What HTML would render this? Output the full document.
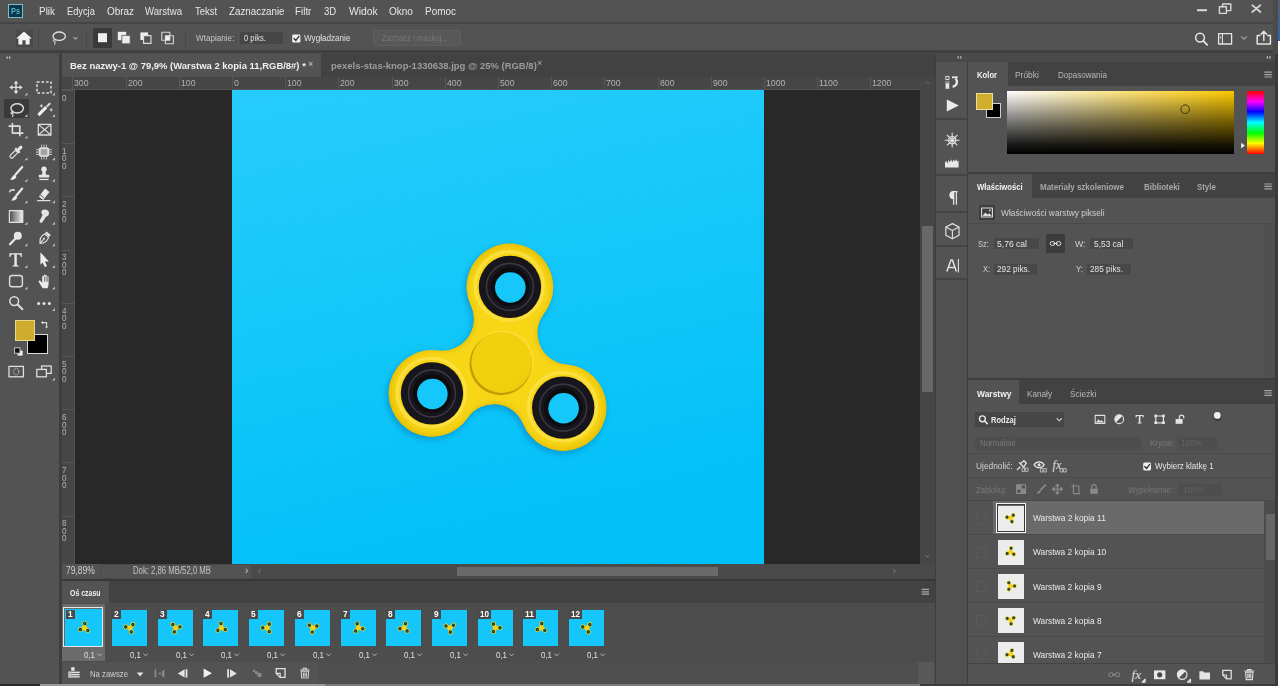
<!DOCTYPE html>
<html lang="pl"><head><meta charset="utf-8"><title>Photoshop</title>
<style>
*{box-sizing:border-box;margin:0;padding:0}
html,body{width:1280px;height:686px;overflow:hidden;background:#535353}
body{position:relative;font-family:"Liberation Sans", "DejaVu Sans", sans-serif;font-size:11px;color:#d8d8d8;-webkit-font-smoothing:antialiased}
.a{position:absolute}
.t{position:absolute;white-space:nowrap;line-height:1;transform-origin:0 50%}
.b{font-weight:bold}
svg{position:absolute;overflow:visible}
</style></head>
<body>
<div id="menubar" class="a" style="left:0;top:0;width:1280px;height:24px;background:#535353;border-bottom:2px solid #454545"></div>
<div class="a" style="left:8px;top:4px;width:14.5px;height:13.5px;background:#07384b;border:1px solid #86bcc6"></div>
<span class="t b" style="left:10.6px;top:6.7px;font-size:8.5px;color:#5ab0c6;transform:scaleX(0.866);">Ps</span>
<span class="t" style="left:38.8px;top:5.8px;font-size:11px;color:#e6e6e6;transform:scaleX(0.903);">Plik</span>
<span class="t" style="left:66.9px;top:5.8px;font-size:11px;color:#e6e6e6;transform:scaleX(0.842);">Edycja</span>
<span class="t" style="left:106.5px;top:5.8px;font-size:11px;color:#e6e6e6;transform:scaleX(0.901);">Obraz</span>
<span class="t" style="left:145.3px;top:5.8px;font-size:11px;color:#e6e6e6;transform:scaleX(0.873);">Warstwa</span>
<span class="t" style="left:194.8px;top:5.8px;font-size:11px;color:#e6e6e6;transform:scaleX(0.865);">Tekst</span>
<span class="t" style="left:228.7px;top:5.8px;font-size:11px;color:#e6e6e6;transform:scaleX(0.891);">Zaznaczanie</span>
<span class="t" style="left:294.8px;top:5.8px;font-size:11px;color:#e6e6e6;transform:scaleX(0.895);">Filtr</span>
<span class="t" style="left:323.7px;top:5.8px;font-size:11px;color:#e6e6e6;transform:scaleX(0.868);">3D</span>
<span class="t" style="left:349.2px;top:5.8px;font-size:11px;color:#e6e6e6;transform:scaleX(0.942);">Widok</span>
<span class="t" style="left:389.3px;top:5.8px;font-size:11px;color:#e6e6e6;transform:scaleX(0.909);">Okno</span>
<span class="t" style="left:424.9px;top:5.8px;font-size:11px;color:#e6e6e6;transform:scaleX(0.903);">Pomoc</span>
<div id="optionsbar" class="a" style="left:0;top:24px;width:1280px;height:30px;background:#535353;border-bottom:1px solid #4a4a4a;box-shadow:inset 0 -3px 0 #404040"></div>
<div class="a " style="left:16px;top:30px;width:17px;height:17px;background:#494949;"></div>
<div class="a " style="left:93px;top:28px;width:19px;height:20px;background:#3a3a3a;"></div>
<span class="t" style="left:196px;top:33.5px;font-size:9px;color:#c4c4c4;transform:scaleX(0.903);">Wtapianie:</span>
<div class="a " style="left:240px;top:32px;width:43px;height:12px;background:#464646;"></div>
<span class="t" style="left:243.7px;top:33.7px;font-size:9px;color:#e2e2e2;transform:scaleX(0.838);">0 piks.</span>
<span class="t" style="left:304.2px;top:34.3px;font-size:9px;color:#e2e2e2;transform:scaleX(0.902);">Wygładzanie</span>
<div class="a " style="left:373px;top:30px;width:88px;height:16px;background:#585858;border:1px solid #5e5e5e;border-radius:2px"></div>
<span class="t" style="left:381.5px;top:33.9px;font-size:9px;color:#777;transform:scaleX(0.853);">Zaznacz i maskuj...</span>
<div id="toolbar" class="a" style="left:0;top:54px;width:62px;height:632px;background:#535353;border-right:3px solid #3e3e3e"></div>
<div class="a " style="left:27px;top:334px;width:21px;height:20px;background:#000;border:1px solid #d8d8d8"></div>
<div class="a " style="left:15px;top:320px;width:20px;height:21px;background:#d0ac2e;border:1px solid #e6d88a"></div>
<div class="a " style="left:4px;top:99px;width:25px;height:19px;background:#3a3a3a;"></div>
<div id="tabs" class="a" style="left:62px;top:54px;width:873px;height:23px;background:#424242"></div>
<div class="a " style="left:62px;top:54px;width:259px;height:23px;background:#535353;"></div>
<span class="t b" style="left:70.1px;top:60.8px;font-size:9.5px;color:#f0f0f0;transform:scaleX(0.995);">Bez nazwy-1 @ 79,9% (Warstwa 2 kopia 11,RGB/8#) *</span>
<span class="t" style="left:307.5px;top:60.2px;font-size:9px;color:#d0d0d0;transform:scaleX(0.999);">×</span>
<span class="t b" style="left:331.1px;top:60.8px;font-size:9.5px;color:#9c9c9c;transform:scaleX(0.998);">pexels-stas-knop-1330638.jpg @ 25% (RGB/8)</span>
<span class="t" style="left:537px;top:59.2px;font-size:9px;color:#b0b0b0;transform:scaleX(0.999);">×</span>
<div id="hruler" class="a" style="left:62px;top:77px;width:873px;height:13px;background:#464646;border-bottom:1px solid #545454"></div>
<div id="vruler" class="a" style="left:62px;top:90px;width:13px;height:474px;background:#464646;border-right:1px solid #545454"></div>
<div id="canvas" class="a" style="left:75px;top:90px;width:845px;height:474px;background:#282828"></div>
<div id="image" class="a" style="left:232px;top:90px;width:532px;height:474px;background:#15c8fb"></div>
<div class="a " style="left:72px;top:77px;width:1px;height:13px;background:#565656;"></div>
<span class="t" style="left:74.39999999999998px;top:79.3px;font-size:9px;color:#b2b2b2;transform:scaleX(0.970);">300</span>
<div class="a " style="left:126px;top:77px;width:1px;height:13px;background:#565656;"></div>
<span class="t" style="left:127.6px;top:79.3px;font-size:9px;color:#b2b2b2;transform:scaleX(0.970);">200</span>
<div class="a " style="left:179px;top:77px;width:1px;height:13px;background:#565656;"></div>
<span class="t" style="left:180.8px;top:79.3px;font-size:9px;color:#b2b2b2;transform:scaleX(0.970);">100</span>
<div class="a " style="left:232px;top:77px;width:1px;height:13px;background:#565656;"></div>
<span class="t" style="left:234.0px;top:79.3px;font-size:9px;color:#b2b2b2;transform:scaleX(0.970);">0</span>
<div class="a " style="left:285px;top:77px;width:1px;height:13px;background:#565656;"></div>
<span class="t" style="left:287.2px;top:79.3px;font-size:9px;color:#b2b2b2;transform:scaleX(0.970);">100</span>
<div class="a " style="left:338px;top:77px;width:1px;height:13px;background:#565656;"></div>
<span class="t" style="left:340.4px;top:79.3px;font-size:9px;color:#b2b2b2;transform:scaleX(0.970);">200</span>
<div class="a " style="left:392px;top:77px;width:1px;height:13px;background:#565656;"></div>
<span class="t" style="left:393.6px;top:79.3px;font-size:9px;color:#b2b2b2;transform:scaleX(0.970);">300</span>
<div class="a " style="left:445px;top:77px;width:1px;height:13px;background:#565656;"></div>
<span class="t" style="left:446.8px;top:79.3px;font-size:9px;color:#b2b2b2;transform:scaleX(0.970);">400</span>
<div class="a " style="left:498px;top:77px;width:1px;height:13px;background:#565656;"></div>
<span class="t" style="left:500.0px;top:79.3px;font-size:9px;color:#b2b2b2;transform:scaleX(0.970);">500</span>
<div class="a " style="left:551px;top:77px;width:1px;height:13px;background:#565656;"></div>
<span class="t" style="left:553.2px;top:79.3px;font-size:9px;color:#b2b2b2;transform:scaleX(0.970);">600</span>
<div class="a " style="left:604px;top:77px;width:1px;height:13px;background:#565656;"></div>
<span class="t" style="left:606.4000000000001px;top:79.3px;font-size:9px;color:#b2b2b2;transform:scaleX(0.970);">700</span>
<div class="a " style="left:658px;top:77px;width:1px;height:13px;background:#565656;"></div>
<span class="t" style="left:659.6px;top:79.3px;font-size:9px;color:#b2b2b2;transform:scaleX(0.970);">800</span>
<div class="a " style="left:711px;top:77px;width:1px;height:13px;background:#565656;"></div>
<span class="t" style="left:712.8px;top:79.3px;font-size:9px;color:#b2b2b2;transform:scaleX(0.970);">900</span>
<div class="a " style="left:764px;top:77px;width:1px;height:13px;background:#565656;"></div>
<span class="t" style="left:766.0px;top:79.3px;font-size:9px;color:#b2b2b2;transform:scaleX(0.970);">1000</span>
<div class="a " style="left:817px;top:77px;width:1px;height:13px;background:#565656;"></div>
<span class="t" style="left:819.2px;top:79.3px;font-size:9px;color:#b2b2b2;transform:scaleX(0.970);">1100</span>
<div class="a " style="left:870px;top:77px;width:1px;height:13px;background:#565656;"></div>
<span class="t" style="left:872.4000000000001px;top:79.3px;font-size:9px;color:#b2b2b2;transform:scaleX(0.970);">1200</span>
<div class="a " style="left:62px;top:90px;width:13px;height:1px;background:#565656;"></div>
<span class="t" style="left:62.2px;top:92.8px;font-size:9.5px;color:#b2b2b2;transform:scaleX(0.852);">0</span>
<div class="a " style="left:62px;top:143px;width:13px;height:1px;background:#565656;"></div>
<span class="t" style="left:62.2px;top:145.9px;font-size:9.5px;color:#b2b2b2;transform:scaleX(0.852);">1</span>
<span class="t" style="left:62.2px;top:153.4px;font-size:9.5px;color:#b2b2b2;transform:scaleX(0.852);">0</span>
<span class="t" style="left:62.2px;top:160.9px;font-size:9.5px;color:#b2b2b2;transform:scaleX(0.852);">0</span>
<div class="a " style="left:62px;top:196px;width:13px;height:1px;background:#565656;"></div>
<span class="t" style="left:62.2px;top:199.2px;font-size:9.5px;color:#b2b2b2;transform:scaleX(0.852);">2</span>
<span class="t" style="left:62.2px;top:206.7px;font-size:9.5px;color:#b2b2b2;transform:scaleX(0.852);">0</span>
<span class="t" style="left:62.2px;top:214.2px;font-size:9.5px;color:#b2b2b2;transform:scaleX(0.852);">0</span>
<div class="a " style="left:62px;top:250px;width:13px;height:1px;background:#565656;"></div>
<span class="t" style="left:62.2px;top:252.4px;font-size:9.5px;color:#b2b2b2;transform:scaleX(0.852);">3</span>
<span class="t" style="left:62.2px;top:259.9px;font-size:9.5px;color:#b2b2b2;transform:scaleX(0.852);">0</span>
<span class="t" style="left:62.2px;top:267.4px;font-size:9.5px;color:#b2b2b2;transform:scaleX(0.852);">0</span>
<div class="a " style="left:62px;top:303px;width:13px;height:1px;background:#565656;"></div>
<span class="t" style="left:62.2px;top:305.6px;font-size:9.5px;color:#b2b2b2;transform:scaleX(0.852);">4</span>
<span class="t" style="left:62.2px;top:313.1px;font-size:9.5px;color:#b2b2b2;transform:scaleX(0.852);">0</span>
<span class="t" style="left:62.2px;top:320.6px;font-size:9.5px;color:#b2b2b2;transform:scaleX(0.852);">0</span>
<div class="a " style="left:62px;top:356px;width:13px;height:1px;background:#565656;"></div>
<span class="t" style="left:62.2px;top:358.8px;font-size:9.5px;color:#b2b2b2;transform:scaleX(0.852);">5</span>
<span class="t" style="left:62.2px;top:366.2px;font-size:9.5px;color:#b2b2b2;transform:scaleX(0.852);">0</span>
<span class="t" style="left:62.2px;top:373.8px;font-size:9.5px;color:#b2b2b2;transform:scaleX(0.852);">0</span>
<div class="a " style="left:62px;top:409px;width:13px;height:1px;background:#565656;"></div>
<span class="t" style="left:62.2px;top:412.0px;font-size:9.5px;color:#b2b2b2;transform:scaleX(0.852);">6</span>
<span class="t" style="left:62.2px;top:419.5px;font-size:9.5px;color:#b2b2b2;transform:scaleX(0.852);">0</span>
<span class="t" style="left:62.2px;top:427.0px;font-size:9.5px;color:#b2b2b2;transform:scaleX(0.852);">0</span>
<div class="a " style="left:62px;top:462px;width:13px;height:1px;background:#565656;"></div>
<span class="t" style="left:62.2px;top:465.2px;font-size:9.5px;color:#b2b2b2;transform:scaleX(0.852);">7</span>
<span class="t" style="left:62.2px;top:472.7px;font-size:9.5px;color:#b2b2b2;transform:scaleX(0.852);">0</span>
<span class="t" style="left:62.2px;top:480.2px;font-size:9.5px;color:#b2b2b2;transform:scaleX(0.852);">0</span>
<div class="a " style="left:62px;top:516px;width:13px;height:1px;background:#565656;"></div>
<span class="t" style="left:62.2px;top:518.4px;font-size:9.5px;color:#b2b2b2;transform:scaleX(0.852);">8</span>
<span class="t" style="left:62.2px;top:525.9px;font-size:9.5px;color:#b2b2b2;transform:scaleX(0.852);">0</span>
<span class="t" style="left:62.2px;top:533.4px;font-size:9.5px;color:#b2b2b2;transform:scaleX(0.852);">0</span>
<div class="a " style="left:920px;top:77px;width:15px;height:488px;background:#464646;"></div>
<div class="a " style="left:922px;top:226px;width:11px;height:166px;background:#686868;"></div>
<div id="status" class="a" style="left:62px;top:564px;width:873px;height:15px;background:#4a4a4a"></div>
<div class="a " style="left:62px;top:564px;width:38px;height:15px;background:#535353;"></div>
<span class="t" style="left:66.2px;top:566.2px;font-size:10px;color:#d2d2d2;transform:scaleX(0.849);">79,89%</span>
<div class="a " style="left:101px;top:565px;width:150px;height:13px;background:#535353;"></div>
<span class="t" style="left:133.2px;top:566.2px;font-size:10px;color:#c4c4c4;transform:scaleX(0.775);">Dok: 2,86 MB/52,0 MB</span>
<span class="t" style="left:245px;top:566.0px;font-size:10px;color:#cfcfcf;transform:scaleX(0.999);">›</span>
<div class="a " style="left:457px;top:567px;width:261px;height:9px;background:#6a6a6a;"></div>
<div id="timeline" class="a" style="left:62px;top:579px;width:873px;height:107px;background:#4d4d4d;border-top:2px solid #383838"></div>
<div class="a " style="left:62px;top:581px;width:873px;height:22px;background:#424242;"></div>
<div class="a " style="left:62px;top:581px;width:47px;height:22px;background:#535353;"></div>
<span class="t b" style="left:69.5px;top:587.5px;font-size:9.5px;color:#f0f0f0;transform:scaleX(0.731);">Oś czasu</span>
<div class="a " style="left:62px;top:662px;width:873px;height:22px;background:#4f4f4f;"></div>
<div class="a " style="left:62px;top:662px;width:256px;height:22px;background:#535353;"></div>
<div class="a " style="left:918px;top:662px;width:16px;height:22px;background:#585858;"></div>
<div class="a " style="left:62px;top:604px;width:43px;height:57px;background:#6b6b6b;"></div>
<div class="a " style="left:63px;top:607px;width:40px;height:40px;background:transparent;border:1px solid #e8e8e8"></div>
<div class="a " style="left:64.5px;top:608.8px;width:37.5px;height:37.7px;background:#14c6fa;"></div>
<div class="a " style="left:66px;top:610px;width:9px;height:9px;background:#4a4a4a;"></div>
<span class="t b" style="left:67.5px;top:609.8px;font-size:9px;color:#ffffff;transform:scaleX(0.919);">1</span>
<span class="t" style="left:83.5px;top:649.8px;font-size:9.5px;color:#e0e0e0;transform:scaleX(0.833);">0,1</span>
<div class="a " style="left:112px;top:609.5px;width:35px;height:36px;background:#14c6fa;"></div>
<div class="a " style="left:112px;top:610px;width:9px;height:9px;background:#4a4a4a;"></div>
<span class="t b" style="left:113.5px;top:609.8px;font-size:9px;color:#ffffff;transform:scaleX(0.919);">2</span>
<span class="t" style="left:129.5px;top:649.8px;font-size:9.5px;color:#e0e0e0;transform:scaleX(0.833);">0,1</span>
<div class="a " style="left:158px;top:609.5px;width:35px;height:36px;background:#14c6fa;"></div>
<div class="a " style="left:158px;top:610px;width:9px;height:9px;background:#4a4a4a;"></div>
<span class="t b" style="left:159.5px;top:609.8px;font-size:9px;color:#ffffff;transform:scaleX(0.919);">3</span>
<span class="t" style="left:175.5px;top:649.8px;font-size:9.5px;color:#e0e0e0;transform:scaleX(0.833);">0,1</span>
<div class="a " style="left:203px;top:609.5px;width:35px;height:36px;background:#14c6fa;"></div>
<div class="a " style="left:203px;top:610px;width:9px;height:9px;background:#4a4a4a;"></div>
<span class="t b" style="left:204.5px;top:609.8px;font-size:9px;color:#ffffff;transform:scaleX(0.919);">4</span>
<span class="t" style="left:220.5px;top:649.8px;font-size:9.5px;color:#e0e0e0;transform:scaleX(0.833);">0,1</span>
<div class="a " style="left:249px;top:609.5px;width:35px;height:36px;background:#14c6fa;"></div>
<div class="a " style="left:249px;top:610px;width:9px;height:9px;background:#4a4a4a;"></div>
<span class="t b" style="left:250.5px;top:609.8px;font-size:9px;color:#ffffff;transform:scaleX(0.919);">5</span>
<span class="t" style="left:266.5px;top:649.8px;font-size:9.5px;color:#e0e0e0;transform:scaleX(0.833);">0,1</span>
<div class="a " style="left:295px;top:609.5px;width:35px;height:36px;background:#14c6fa;"></div>
<div class="a " style="left:295px;top:610px;width:9px;height:9px;background:#4a4a4a;"></div>
<span class="t b" style="left:296.5px;top:609.8px;font-size:9px;color:#ffffff;transform:scaleX(0.919);">6</span>
<span class="t" style="left:312.5px;top:649.8px;font-size:9.5px;color:#e0e0e0;transform:scaleX(0.833);">0,1</span>
<div class="a " style="left:341px;top:609.5px;width:35px;height:36px;background:#14c6fa;"></div>
<div class="a " style="left:341px;top:610px;width:9px;height:9px;background:#4a4a4a;"></div>
<span class="t b" style="left:342.5px;top:609.8px;font-size:9px;color:#ffffff;transform:scaleX(0.919);">7</span>
<span class="t" style="left:358.5px;top:649.8px;font-size:9.5px;color:#e0e0e0;transform:scaleX(0.833);">0,1</span>
<div class="a " style="left:386px;top:609.5px;width:35px;height:36px;background:#14c6fa;"></div>
<div class="a " style="left:386px;top:610px;width:9px;height:9px;background:#4a4a4a;"></div>
<span class="t b" style="left:387.5px;top:609.8px;font-size:9px;color:#ffffff;transform:scaleX(0.919);">8</span>
<span class="t" style="left:403.5px;top:649.8px;font-size:9.5px;color:#e0e0e0;transform:scaleX(0.833);">0,1</span>
<div class="a " style="left:432px;top:609.5px;width:35px;height:36px;background:#14c6fa;"></div>
<div class="a " style="left:432px;top:610px;width:9px;height:9px;background:#4a4a4a;"></div>
<span class="t b" style="left:433.5px;top:609.8px;font-size:9px;color:#ffffff;transform:scaleX(0.919);">9</span>
<span class="t" style="left:449.5px;top:649.8px;font-size:9.5px;color:#e0e0e0;transform:scaleX(0.833);">0,1</span>
<div class="a " style="left:478px;top:609.5px;width:35px;height:36px;background:#14c6fa;"></div>
<div class="a " style="left:478px;top:610px;width:13px;height:9px;background:#4a4a4a;"></div>
<span class="t b" style="left:479.5px;top:609.8px;font-size:9px;color:#ffffff;transform:scaleX(0.899);">10</span>
<span class="t" style="left:495.5px;top:649.8px;font-size:9.5px;color:#e0e0e0;transform:scaleX(0.833);">0,1</span>
<div class="a " style="left:523px;top:609.5px;width:35px;height:36px;background:#14c6fa;"></div>
<div class="a " style="left:523px;top:610px;width:13px;height:9px;background:#4a4a4a;"></div>
<span class="t b" style="left:524.5px;top:609.8px;font-size:9px;color:#ffffff;transform:scaleX(0.946);">11</span>
<span class="t" style="left:540.5px;top:649.8px;font-size:9.5px;color:#e0e0e0;transform:scaleX(0.833);">0,1</span>
<div class="a " style="left:569px;top:609.5px;width:35px;height:36px;background:#14c6fa;"></div>
<div class="a " style="left:569px;top:610px;width:13px;height:9px;background:#4a4a4a;"></div>
<span class="t b" style="left:570.5px;top:609.8px;font-size:9px;color:#ffffff;transform:scaleX(0.899);">12</span>
<span class="t" style="left:586.5px;top:649.8px;font-size:9.5px;color:#e0e0e0;transform:scaleX(0.833);">0,1</span>
<span class="t" style="left:90px;top:668.6px;font-size:9.5px;color:#cfcfcf;transform:scaleX(0.818);">Na zawsze</span>
<div id="dockbg" class="a" style="left:935px;top:54px;width:345px;height:632px;background:#3e3e3e"></div>
<div class="a " style="left:936px;top:54px;width:339px;height:8px;background:#494949;"></div>
<div id="dock" class="a" style="left:936px;top:62px;width:31px;height:624px;background:#535353"></div>
<div class="a " style="left:936px;top:280px;width:31px;height:406px;background:#505050;"></div>
<div class="a " style="left:936px;top:118px;width:31px;height:2px;background:#444444;"></div>
<div class="a " style="left:936px;top:174px;width:31px;height:2px;background:#444444;"></div>
<div class="a " style="left:936px;top:211px;width:31px;height:2px;background:#444444;"></div>
<div class="a " style="left:936px;top:245px;width:31px;height:2px;background:#444444;"></div>
<div class="a " style="left:936px;top:278px;width:31px;height:2px;background:#444444;"></div>
<div id="p-color" class="a" style="left:968px;top:62px;width:307px;height:110px;background:#535353"></div>
<div class="a " style="left:968px;top:62px;width:307px;height:24px;background:#424242;"></div>
<div class="a " style="left:968px;top:62px;width:40px;height:24px;background:#535353;"></div>
<span class="t b" style="left:977.1px;top:69.7px;font-size:9.5px;color:#f2f2f2;transform:scaleX(0.810);">Kolor</span>
<span class="t" style="left:1015.4px;top:69.7px;font-size:9.5px;color:#b8b8b8;transform:scaleX(0.884);">Próbki</span>
<span class="t" style="left:1057.8px;top:69.7px;font-size:9.5px;color:#b8b8b8;transform:scaleX(0.849);">Dopasowania</span>
<div class="a" style="left:1007px;top:91px;width:227px;height:63px;background:linear-gradient(to bottom,rgba(0,0,0,0) 0%,rgba(0,0,0,0.08) 8%,rgba(0,0,0,0.55) 50%,rgba(0,0,0,0.9) 85%,#000 100%),linear-gradient(to right,#fff,#fbc800)"></div>
<div class="a" style="left:1247px;top:91px;width:17px;height:63px;background:linear-gradient(to bottom,#f00 0%,#f0f 17%,#00f 33%,#0ff 50%,#0f0 67%,#ff0 83%,#f00 100%)"></div>
<div class="a " style="left:986px;top:103px;width:15px;height:15px;background:#000;border:1px solid #cfcfcf"></div>
<div class="a " style="left:976px;top:93px;width:17px;height:17px;background:#d2ae2e;border:1px solid #e9e0a0"></div>
<div id="p-props" class="a" style="left:968px;top:174px;width:307px;height:204px;background:#535353"></div>
<div class="a " style="left:968px;top:174px;width:307px;height:24px;background:#424242;"></div>
<div class="a " style="left:968px;top:174px;width:64px;height:24px;background:#535353;"></div>
<span class="t b" style="left:977px;top:182.1px;font-size:9.5px;color:#f2f2f2;transform:scaleX(0.809);">Właściwości</span>
<span class="t b" style="left:1040.3px;top:182.1px;font-size:9.5px;color:#a8a8a8;transform:scaleX(0.842);">Materiały szkoleniowe</span>
<span class="t b" style="left:1143.6px;top:182.1px;font-size:9.5px;color:#a8a8a8;transform:scaleX(0.837);">Biblioteki</span>
<span class="t b" style="left:1197px;top:182.1px;font-size:9.5px;color:#a8a8a8;transform:scaleX(0.828);">Style</span>
<span class="t" style="left:1001.4px;top:208.4px;font-size:9.5px;color:#cfcfcf;transform:scaleX(0.880);">Właściwości warstwy pikseli</span>
<div class="a " style="left:968px;top:223px;width:307px;height:1px;background:#4a4a4a;"></div>
<span class="t" style="left:978px;top:238.6px;font-size:9.5px;color:#cfcfcf;transform:scaleX(0.787);">Sz:</span>
<div class="a " style="left:994px;top:238px;width:45px;height:11px;background:#484848;"></div>
<span class="t" style="left:997.1px;top:238.6px;font-size:9.5px;color:#e4e4e4;transform:scaleX(0.902);">5,76 cal</span>
<div class="a " style="left:1046px;top:234px;width:19px;height:19px;background:#3c3c3c;"></div>
<span class="t" style="left:1074.9px;top:238.6px;font-size:9.5px;color:#cfcfcf;transform:scaleX(0.918);">W:</span>
<div class="a " style="left:1090px;top:238px;width:43px;height:11px;background:#484848;"></div>
<span class="t" style="left:1094.2px;top:238.6px;font-size:9.5px;color:#e4e4e4;transform:scaleX(0.881);">5,53 cal</span>
<span class="t" style="left:982.6px;top:264.4px;font-size:9.5px;color:#cfcfcf;transform:scaleX(0.780);">X:</span>
<div class="a " style="left:994px;top:264px;width:43px;height:11px;background:#484848;"></div>
<span class="t" style="left:997.1px;top:264.4px;font-size:9.5px;color:#e4e4e4;transform:scaleX(0.868);">292 piks.</span>
<span class="t" style="left:1075.9px;top:264.4px;font-size:9.5px;color:#cfcfcf;transform:scaleX(0.828);">Y:</span>
<div class="a " style="left:1087px;top:264px;width:44px;height:11px;background:#484848;"></div>
<span class="t" style="left:1090.4px;top:264.4px;font-size:9.5px;color:#e4e4e4;transform:scaleX(0.868);">285 piks.</span>
<div id="p-layers" class="a" style="left:968px;top:380px;width:307px;height:306px;background:#535353"></div>
<div class="a " style="left:968px;top:380px;width:307px;height:24px;background:#424242;"></div>
<div class="a " style="left:968px;top:380px;width:51px;height:24px;background:#535353;"></div>
<span class="t b" style="left:977px;top:388.6px;font-size:9.5px;color:#f2f2f2;transform:scaleX(0.889);">Warstwy</span>
<span class="t" style="left:1027.2px;top:388.6px;font-size:9.5px;color:#b8b8b8;transform:scaleX(0.861);">Kanały</span>
<span class="t" style="left:1070.3px;top:388.6px;font-size:9.5px;color:#b8b8b8;transform:scaleX(0.874);">Ścieżki</span>
<div class="a " style="left:975px;top:412px;width:89px;height:15px;background:#464646;"></div>
<span class="t b" style="left:990.6px;top:414.9px;font-size:9.5px;color:#ececec;transform:scaleX(0.796);">Rodzaj</span>
<div class="a " style="left:975px;top:437px;width:166px;height:13px;background:#4e4e4e;"></div>
<div class="a " style="left:1178px;top:437px;width:40px;height:13px;background:#4e4e4e;"></div>
<div class="a " style="left:1178px;top:484px;width:44px;height:12px;background:#4e4e4e;"></div>
<span class="t" style="left:979.6px;top:438.4px;font-size:9.5px;color:#7a7a7a;transform:scaleX(0.832);">Normalnie</span>
<span class="t" style="left:1149.8px;top:438.4px;font-size:9.5px;color:#7a7a7a;transform:scaleX(0.847);">Krycie:</span>
<span class="t" style="left:1181px;top:438.4px;font-size:9.5px;color:#646464;transform:scaleX(0.864);">100%</span>
<div class="a " style="left:968px;top:453px;width:307px;height:1px;background:#4a4a4a;"></div>
<span class="t" style="left:975.5px;top:461.2px;font-size:9.5px;color:#d4d4d4;transform:scaleX(0.880);">Ujednolić:</span>
<span class="t" style="left:1155.1px;top:461.2px;font-size:9.5px;color:#e4e4e4;transform:scaleX(0.843);">Wybierz klatkę 1</span>
<div class="a " style="left:968px;top:477px;width:307px;height:1px;background:#4a4a4a;"></div>
<span class="t" style="left:975.5px;top:485.1px;font-size:9.5px;color:#777;transform:scaleX(0.802);">Zablokuj:</span>
<span class="t" style="left:1128px;top:485.1px;font-size:9.5px;color:#777;transform:scaleX(0.832);">Wypełnienie:</span>
<span class="t" style="left:1183px;top:485.1px;font-size:9.5px;color:#626262;transform:scaleX(0.864);">100%</span>
<div class="a " style="left:968px;top:500px;width:307px;height:1px;background:#484848;"></div>
<div class="a " style="left:993px;top:501px;width:271px;height:33px;background:#6a6a6a;"></div>
<div class="a " style="left:968px;top:534px;width:296px;height:1px;background:#4b4b4b;"></div>
<div class="a " style="left:976px;top:513px;width:10px;height:11px;background:transparent;border:1px solid #595959"></div>
<div class="a " style="left:998px;top:505.5px;width:25.5px;height:25px;background:#ececec;"></div>
<div class="a " style="left:995.5px;top:503px;width:30.5px;height:30px;background:transparent;border:1px solid #f4f4f4;outline:1px solid #3a3a3a;outline-offset:-2px"></div>
<span class="t" style="left:1032.7px;top:513.2px;font-size:9.5px;color:#e8e8e8;transform:scaleX(0.884);">Warstwa 2 kopia 11</span>
<div class="a " style="left:968px;top:568px;width:296px;height:1px;background:#4b4b4b;"></div>
<div class="a " style="left:976px;top:547px;width:10px;height:11px;background:transparent;border:1px solid #595959"></div>
<div class="a " style="left:998px;top:539.5px;width:25.5px;height:25px;background:#ececec;"></div>
<span class="t" style="left:1032.7px;top:547.0px;font-size:9.5px;color:#e8e8e8;transform:scaleX(0.882);">Warstwa 2 kopia 10</span>
<div class="a " style="left:968px;top:602px;width:296px;height:1px;background:#4b4b4b;"></div>
<div class="a " style="left:976px;top:581px;width:10px;height:11px;background:transparent;border:1px solid #595959"></div>
<div class="a " style="left:998px;top:573.5px;width:25.5px;height:25px;background:#ececec;"></div>
<span class="t" style="left:1032.7px;top:581.5px;font-size:9.5px;color:#e8e8e8;transform:scaleX(0.881);">Warstwa 2 kopia 9</span>
<div class="a " style="left:968px;top:636px;width:296px;height:1px;background:#4b4b4b;"></div>
<div class="a " style="left:976px;top:615px;width:10px;height:11px;background:transparent;border:1px solid #595959"></div>
<div class="a " style="left:998px;top:607.5px;width:25.5px;height:25px;background:#ececec;"></div>
<span class="t" style="left:1032.7px;top:615.6px;font-size:9.5px;color:#e8e8e8;transform:scaleX(0.881);">Warstwa 2 kopia 8</span>
<div class="a " style="left:976px;top:649px;width:10px;height:11px;background:transparent;border:1px solid #595959"></div>
<div class="a " style="left:998px;top:641.5px;width:25.5px;height:21.5px;background:#ececec;"></div>
<span class="t" style="left:1032.7px;top:649.5px;font-size:9.5px;color:#e8e8e8;transform:scaleX(0.881);">Warstwa 2 kopia 7</span>
<div class="a " style="left:968px;top:663px;width:307px;height:23px;background:#535353;border-top:1px solid #444"></div>
<div class="a " style="left:1264px;top:501px;width:11px;height:162px;background:#4c4c4c;"></div>
<div class="a " style="left:1266px;top:514px;width:9px;height:46px;background:#666666;"></div>
<div class="a " style="left:1275px;top:54px;width:3px;height:632px;background:#3a3a3a;"></div>
<div class="a " style="left:1273px;top:0px;width:5px;height:54px;background:#4b4b4b;"></div>
<div class="a " style="left:1264px;top:224px;width:11px;height:154px;background:#4f4f4f;"></div>
<div class="a " style="left:1278px;top:0px;width:2px;height:686px;background:#fff;"></div>
<div class="a" style="left:1278px;top:0;width:2px;height:41px;background:linear-gradient(#5a5f68,#2f66b0)"></div>
<div class="a " style="left:0px;top:684px;width:40px;height:2px;background:#2a2a2a;"></div>
<div class="a " style="left:40px;top:684px;width:285px;height:2px;background:#9a9a9a;"></div>
<div class="a " style="left:325px;top:684px;width:595px;height:2px;background:#7a7a7a;"></div>
<div class="a " style="left:920px;top:684px;width:358px;height:2px;background:#3c3c3c;"></div>
<svg class="a" style="left:0;top:0;pointer-events:none" width="1280" height="686" viewBox="0 0 1280 686"><defs>
<clipPath id="lc"><rect x="990" y="630" width="40" height="33"/></clipPath>
<filter id="nz" x="0" y="0" width="100%" height="100%"><feTurbulence type="fractalNoise" baseFrequency="0.9" numOctaves="2" seed="3" result="n"/><feColorMatrix type="matrix" values="0 0 0 0 0  0 0 0 0 0.45  0 0 0 0 0.7  0.5 0.5 0 0 -0.42"/></filter>
<filter id="bl" x="-20%" y="-20%" width="140%" height="140%"><feGaussianBlur stdDeviation="3.2"/></filter>
<filter id="sh" x="-20%" y="-20%" width="140%" height="140%"><feGaussianBlur stdDeviation="3"/></filter>
<filter id="b1" x="-20%" y="-20%" width="140%" height="140%"><feGaussianBlur stdDeviation="0.6"/></filter>
<clipPath id="bc"><path d="M-30.86 -57.13 A43.3 43.3 0 1 1 42.41 -49.17 A31.66 31.66 0 0 0 64.90 1.84 A43.3 43.3 0 1 1 21.38 61.31 A31.66 31.66 0 0 0 -34.04 55.29 A43.3 43.3 0 1 1 -63.78 -12.14 A31.66 31.66 0 0 0 -30.86 -57.13 Z"/></clipPath>
<radialGradient id="hubg" cx="0.42" cy="0.4" r="0.62"><stop offset="0" stop-color="#f2d211"/><stop offset="0.9" stop-color="#f0cf0e"/><stop offset="1" stop-color="#ecc80c"/></radialGradient>
<g id="mini"><path d="M53.46 -36.85 A43.3 43.3 0 1 1 53.46 36.85 A31.66 31.66 0 0 0 5.18 64.72 A43.3 43.3 0 1 1 -58.64 27.87 A31.66 31.66 0 0 0 -58.64 -27.87 A43.3 43.3 0 1 1 5.18 -64.72 A31.66 31.66 0 0 0 53.46 -36.85 Z" fill="#f3d21a"/><circle cx="76.2" cy="0.0" r="30" fill="#1b3a2e"/><circle cx="76.2" cy="0.0" r="10" fill="#1a8fb0"/><circle cx="-38.1" cy="66.0" r="30" fill="#1b3a2e"/><circle cx="-38.1" cy="66.0" r="10" fill="#1a8fb0"/><circle cx="-38.1" cy="-66.0" r="30" fill="#1b3a2e"/><circle cx="-38.1" cy="-66.0" r="10" fill="#1a8fb0"/></g>
<linearGradient id="sky" x1="0" y1="0" x2="0.25" y2="1"><stop offset="0" stop-color="#28cdfc"/><stop offset="0.5" stop-color="#15c8fb"/><stop offset="1" stop-color="#03c1fa"/></linearGradient>
</defs>
<rect x="232" y="90" width="532" height="474" fill="url(#sky)"/>
<rect x="232" y="90" width="532" height="474" filter="url(#nz)" opacity="0.4"/>
<g transform="translate(501.7,362.6)">
<path d="M-30.86 -57.13 A43.3 43.3 0 1 1 42.41 -49.17 A31.66 31.66 0 0 0 64.90 1.84 A43.3 43.3 0 1 1 21.38 61.31 A31.66 31.66 0 0 0 -34.04 55.29 A43.3 43.3 0 1 1 -63.78 -12.14 A31.66 31.66 0 0 0 -30.86 -57.13 Z" fill="#0b6fa6" opacity="0.55" filter="url(#sh)" transform="translate(-1.5,2.5)"/>
<g filter="url(#b1)"><path d="M-30.86 -57.13 A43.3 43.3 0 1 1 42.41 -49.17 A31.66 31.66 0 0 0 64.90 1.84 A43.3 43.3 0 1 1 21.38 61.31 A31.66 31.66 0 0 0 -34.04 55.29 A43.3 43.3 0 1 1 -63.78 -12.14 A31.66 31.66 0 0 0 -30.86 -57.13 Z" fill="#e6bd06"/>
<g clip-path="url(#bc)"><path d="M-30.86 -57.13 A43.3 43.3 0 1 1 42.41 -49.17 A31.66 31.66 0 0 0 64.90 1.84 A43.3 43.3 0 1 1 21.38 61.31 A31.66 31.66 0 0 0 -34.04 55.29 A43.3 43.3 0 1 1 -63.78 -12.14 A31.66 31.66 0 0 0 -30.86 -57.13 Z" fill="#f7d612" filter="url(#bl)" transform="scale(0.97)"/></g>
<circle cx="7.63" cy="-76.55" r="34.2" fill="none" stroke="#fde75e" stroke-width="3" opacity="0.6" filter="url(#b1)"/>
<circle cx="8.23" cy="-75.75" r="31.2" fill="#15121a"/>
<circle cx="8.23" cy="-75.75" r="23.5" fill="none" stroke="#3b3742" stroke-width="1.6"/>
<circle cx="8.23" cy="-75.75" r="19" fill="#0d0b10"/>
<circle cx="8.63" cy="-75.15" r="15.3" fill="#14c7fb"/>
<circle cx="60.89" cy="44.20" r="34.2" fill="none" stroke="#fde75e" stroke-width="3" opacity="0.6" filter="url(#b1)"/>
<circle cx="61.49" cy="45.00" r="31.2" fill="#15121a"/>
<circle cx="61.49" cy="45.00" r="23.5" fill="none" stroke="#3b3742" stroke-width="1.6"/>
<circle cx="61.49" cy="45.00" r="19" fill="#0d0b10"/>
<circle cx="61.89" cy="45.60" r="15.3" fill="#14c7fb"/>
<circle cx="-70.32" cy="29.95" r="34.2" fill="none" stroke="#fde75e" stroke-width="3" opacity="0.6" filter="url(#b1)"/>
<circle cx="-69.72" cy="30.75" r="31.2" fill="#15121a"/>
<circle cx="-69.72" cy="30.75" r="23.5" fill="none" stroke="#3b3742" stroke-width="1.6"/>
<circle cx="-69.72" cy="30.75" r="19" fill="#0d0b10"/>
<circle cx="-69.32" cy="31.35" r="15.3" fill="#14c7fb"/>
<circle cx="1" cy="-1.2" r="31" fill="#fbe24a" opacity="0.6" filter="url(#b1)"/>
<circle cx="-1" cy="1.4" r="31.2" fill="#b88e00" opacity="0.8" filter="url(#b1)"/>
<circle cx="0" cy="0" r="30.3" fill="url(#hubg)"/>
</g></g>
<use href="#mini" transform="translate(84.3,627.8) rotate(-84) scale(0.057)"/>
<use href="#mini" transform="translate(130.0,627.8) rotate(-48) scale(0.057)"/>
<use href="#mini" transform="translate(175.7,627.8) rotate(-12) scale(0.057)"/>
<use href="#mini" transform="translate(221.4,627.8) rotate(24) scale(0.057)"/>
<use href="#mini" transform="translate(267.1,627.8) rotate(60) scale(0.057)"/>
<use href="#mini" transform="translate(312.8,627.8) rotate(96) scale(0.057)"/>
<use href="#mini" transform="translate(358.5,627.8) rotate(132) scale(0.057)"/>
<use href="#mini" transform="translate(404.2,627.8) rotate(168) scale(0.057)"/>
<use href="#mini" transform="translate(449.9,627.8) rotate(204) scale(0.057)"/>
<use href="#mini" transform="translate(495.6,627.8) rotate(240) scale(0.057)"/>
<use href="#mini" transform="translate(541.3,627.8) rotate(276) scale(0.057)"/>
<use href="#mini" transform="translate(587.0,627.8) rotate(312) scale(0.057)"/>
<use href="#mini" transform="translate(1010.7,518) rotate(312) scale(0.05)"/>
<use href="#mini" transform="translate(1010.7,552) rotate(276) scale(0.05)"/>
<use href="#mini" transform="translate(1010.7,586) rotate(240) scale(0.05)"/>
<use href="#mini" transform="translate(1010.7,620) rotate(204) scale(0.05)"/>
<use href="#mini" transform="translate(1010.7,654) rotate(168) scale(0.05)"/></svg>
<svg class="a" style="left:0;top:0;pointer-events:none" width="1280" height="686" viewBox="0 0 1280 686"><g id="tools" fill="none" stroke="#dedede" stroke-width="1.3" stroke-linecap="round" stroke-linejoin="round">
<g transform="translate(16,87.4)"><path d="M0 -5.5V5.5M-5.5 0H5.5" stroke-width="1.4"/><path d="M0 -6.6L-2.3 -3.6H2.3ZM0 6.6L-2.3 3.6H2.3ZM-6.6 0L-3.6 -2.3V2.3ZM6.6 0L3.6 -2.3V2.3Z" fill="#dedede" stroke="none"/></g>
<rect x="37" y="81.9" width="14" height="11" stroke-dasharray="2.6 1.9" stroke-width="1.5" stroke-linecap="butt"/>
<g transform="translate(16.6,109.95)"><ellipse cx="0.6" cy="-1.6" rx="6.3" ry="4.6" stroke-width="1.4"/><path d="M-4 1.6c-1.6 0.2-2.2 1.8-0.8 2.4c1.2 0.4 1.6-0.9 0.8-1.6M-3.6 3.6c0.3 1.4 0 2.3-0.6 3" stroke-width="1.1"/></g>
<g transform="translate(44,109.95)"><path d="M-5.6 5.2L2.2 -2.8" stroke-width="3" stroke="#f2f2f2" stroke-linecap="butt"/><path d="M3.2 -3.8L5.6 -6.2" stroke-width="2" /><path d="M-2.6 -5.2v2.2M-3.7 -4.1h2.2M7.2 -1.2v2.2M6.1 -0.1h2.2M5.8 -6.4v0.1" stroke-width="1"/></g>
<g transform="translate(16,129.5)" stroke-width="1.6" stroke-linecap="butt"><path d="M-3.6 -6.6V3.6H7.4M-7.4 -3.4H3.8V6.8"/></g>
<g transform="translate(44.6,129.7)" stroke-width="1.3"><rect x="-6.3" y="-5.3" width="12.6" height="10.6"/><path d="M-6.3 -5.3L6.3 5.3M6.3 -5.3L-6.3 5.3" stroke-width="1.1"/></g>
<g transform="translate(16,152.05) rotate(45)"><rect x="-1.7" y="-1" width="3.4" height="8.6" rx="1.2" stroke-width="1.2"/><rect x="-3.2" y="-3.2" width="6.4" height="2.2" fill="#e8e8e8" stroke="none"/><rect x="-1.6" y="-8.4" width="3.2" height="5.6" rx="1.4" fill="#e8e8e8" stroke="none"/></g>
<g transform="translate(44,152.05)"><rect x="-4.8" y="-4.2" width="9.6" height="8.4" rx="2.2" fill="#cfcfcf" stroke="#e6e6e6" stroke-width="1.2"/><path d="M-7.6 -2.4h1.6M-7.6 0h1.6M-7.6 2.4h1.6M6 -2.4h1.6M6 0h1.6M6 2.4h1.6M-2.4 -7v1.4M0 -7v1.4M2.4 -7v1.4M-2.4 5.6v1.4M0 5.6v1.4M2.4 5.6v1.4" stroke-width="1" stroke="#cfcfcf"/><path d="M-2 -2.4v4.8M0 -2.4v4.8M2 -2.4v4.8" stroke="#6a6a6a" stroke-width="0.9"/></g>
<g transform="translate(16,173.60000000000002)"><path d="M6.2 -6.6L-0.6 1.2" stroke-width="2.2" stroke="#e8e8e8"/><path d="M-1.6 1.4c-2.4 0.6-2.2 3.4-4.6 4.6c2.8 0.6 6-0.6 6.6-3.2z" fill="#f0f0f0" stroke="none"/></g>
<g transform="translate(44,173.60000000000002)" fill="#e8e8e8" stroke="none"><circle cx="0" cy="-4.4" r="2.7"/><path d="M-1.4 -2.6h2.8l0.6 4h-4z"/><rect x="-5.2" y="1.2" width="10.4" height="2.8" rx="0.6"/><rect x="-4.6" y="5.2" width="9.2" height="1.3"/></g>
<g transform="translate(16,195.15)"><path d="M6.2 -6.6L0.2 0.6" stroke-width="2.2" stroke="#e8e8e8"/><path d="M-0.8 0.9c-2.2 0.6-2 3.2-4.2 4.4c2.6 0.6 5.6-0.6 6.2-3z" fill="#f0f0f0" stroke="none"/><path d="M-6.4 -3.4c1-1.8 3-2.4 4.6-1.6" stroke-width="1.5"/><path d="M-2.6 -6.6l1.2 2-2.2 0.6z" fill="#dedede" stroke="none"/></g>
<g transform="translate(44,195.15)"><path d="M-4.6 2.6L1.6 -5.4L6 -2L-0.4 6z" fill="#e8e8e8" stroke="none" transform="translate(-0.5,-1.2)"/><path d="M-6.4 5.4H6" stroke-width="1.3"/><path d="M-4.4 2.8l3.4 2.6" stroke="#5a5a5a" stroke-width="1" transform="translate(0.4,-3.2)"/></g>
<defs><linearGradient id="gt" x1="0" x2="1" y1="0" y2="0"><stop offset="0" stop-color="#4a4a4a"/><stop offset="1" stop-color="#f2f2f2"/></linearGradient></defs>
<rect x="9.4" y="210.70000000000002" width="13.4" height="11.6" fill="url(#gt)" stroke="#e2e2e2" stroke-width="1.2"/>
<g transform="translate(44,216.70000000000002)" fill="#e4e4e4" stroke="none"><path d="M-1.6 -6.6c2.6-1.2 6.8-0.4 6.6 3.2c-0.1 2.2-1.4 3.2-3 3.4l-3.6 5.6c-0.8 1.2-3.6-0.2-2.8-1.6l3-5.6c-1.6-1.4-1.8-4.2-0.2-5z"/></g>
<g transform="translate(16,238.25)"><circle cx="1.8" cy="-2.6" r="4" fill="#e6e6e6" stroke="none"/><path d="M-0.8 0.4L-6 6" stroke-width="2.2" stroke="#e6e6e6"/></g>
<g transform="translate(44.4,238.25) rotate(40)" stroke-width="1.2"><path d="M0 6.8C-3.6 3.4-4 0-2.6 -3.4H2.6C4 0 3.6 3.4 0 6.8Z"/><path d="M0 6.4V1.4"/><circle cx="0" cy="0.4" r="1" fill="#dedede" stroke="none"/><rect x="-2.8" y="-6.6" width="5.6" height="2.4" fill="#e6e6e6" stroke="none"/></g>
<g transform="translate(15.6,259.8)" fill="#e8e8e8" stroke="none"><path d="M-6.2 -6.6H6.2V-2.8H5.2C5 -4.6 4.4 -5.2 2.6 -5.2H1.2V4.4C1.2 5.4 1.8 5.6 3 5.7V6.8H-3V5.7C-1.8 5.6 -1.2 5.4 -1.2 4.4V-5.2H-2.6C-4.4 -5.2 -5 -4.6 -5.2 -2.8H-6.2Z"/></g>
<g transform="translate(44,259.8)" fill="#efefef" stroke="none"><path d="M-3.6 -7.6L4.8 1.6H0.8L3 6.2L0.8 7.2L-1.4 2.6L-3.6 5Z"/></g>
<rect x="9.6" y="275.55" width="12.8" height="11.2" rx="2.6" stroke-width="1.4"/>
<g transform="translate(44,281.35)" fill="#ececec" stroke="none"><path d="M-2.8 6.8C-4.4 4.6-5.8 2.4-6.8 0.6C-7.4-0.6-5.8-1.4-5 -0.4L-3.4 1.6V-4.6C-3.4-5.8-1.8-5.8-1.8-4.6V-6C-1.8-7.2-0.2-7.2-0.2-6V-5.4C-0.2-6.6 1.4-6.6 1.4-5.4V-4.2C1.4-5.4 3-5.4 3-4.2V2C3 4 2.6 5.4 2 6.8Z" transform="translate(1.6,0)"/><path d="M-1.1 -4.4V0M0.5 -4.8V0M2.1 -4V0" stroke="#555" stroke-width="0.7" transform="translate(1.6,0)"/></g>
<g transform="translate(16,302.9)"><circle cx="-1.8" cy="-1.8" r="4.4" stroke-width="1.5"/><path d="M1.6 1.6L6.4 6.4" stroke-width="2"/></g>
<g fill="#e8e8e8" stroke="none"><circle cx="38.6" cy="303.5" r="1.5"/><circle cx="44" cy="303.5" r="1.5"/><circle cx="49.4" cy="303.5" r="1.5"/></g>
</g>
<path d="M27.5 92.5V95.5H24.5Z" fill="#b8b8b8"/>
<path d="M55.0 92.5V95.5H52.0Z" fill="#b8b8b8"/>
<path d="M27.5 114.05V117.05H24.5Z" fill="#b8b8b8"/>
<path d="M55.0 114.05V117.05H52.0Z" fill="#b8b8b8"/>
<path d="M27.5 135.6V138.6H24.5Z" fill="#b8b8b8"/>
<path d="M27.5 157.15V160.15H24.5Z" fill="#b8b8b8"/>
<path d="M55.0 157.15V160.15H52.0Z" fill="#b8b8b8"/>
<path d="M27.5 178.70000000000002V181.70000000000002H24.5Z" fill="#b8b8b8"/>
<path d="M55.0 178.70000000000002V181.70000000000002H52.0Z" fill="#b8b8b8"/>
<path d="M27.5 200.25V203.25H24.5Z" fill="#b8b8b8"/>
<path d="M55.0 200.25V203.25H52.0Z" fill="#b8b8b8"/>
<path d="M27.5 221.8V224.8H24.5Z" fill="#b8b8b8"/>
<path d="M55.0 221.8V224.8H52.0Z" fill="#b8b8b8"/>
<path d="M27.5 243.35V246.35H24.5Z" fill="#b8b8b8"/>
<path d="M55.0 243.35V246.35H52.0Z" fill="#b8b8b8"/>
<path d="M27.5 264.90000000000003V267.90000000000003H24.5Z" fill="#b8b8b8"/>
<path d="M55.0 264.90000000000003V267.90000000000003H52.0Z" fill="#b8b8b8"/>
<path d="M27.5 286.45000000000005V289.45000000000005H24.5Z" fill="#b8b8b8"/>
<path d="M55.0 286.45000000000005V289.45000000000005H52.0Z" fill="#b8b8b8"/>
<path d="M55.0 308.0V311.0H52.0Z" fill="#b8b8b8"/>
<g fill="none" stroke="#dedede" stroke-width="1.1">
<path d="M42.4 322.6H46.6V326.6" /><path d="M41 322.6l2-1.6v3.2zM46.6 328.4l-1.6-2h3.2z" fill="#dedede" stroke="none"/>
<rect x="17.6" y="350.6" width="5" height="5" fill="#f0f0f0" stroke="none"/><rect x="14.6" y="347.8" width="5.4" height="5.4" fill="#111" stroke="#d0d0d0" stroke-width="0.9"/>
<rect x="9" y="366.4" width="14.4" height="10.4" stroke-width="1.3"/><ellipse cx="16.2" cy="371.6" rx="2.6" ry="3.3" stroke-width="1" stroke-dasharray="1.2 0.9"/>
<rect x="41.6" y="366" width="9.6" height="7.4" stroke-width="1.3" fill="#535353"/><rect x="36.8" y="369.4" width="9.6" height="7.4" stroke-width="1.3" fill="#535353"/>
</g>
<path d="M55.0 377.5V380.5H52.0Z" fill="#b8b8b8"/>
<rect x="6.5" y="56.5" width="1.3" height="2.2" fill="#c8c8c8"/><rect x="9" y="56.5" width="1.3" height="2.2" fill="#c8c8c8"/>
<g id="opt" fill="none" stroke="#e4e4e4" stroke-width="1.3" stroke-linejoin="round">
<path d="M24 31.4L16.2 38.4H18.4V44.4H22.4V40.2H25.6V44.4H29.6V38.4H31.8Z" fill="#f2f2f2" stroke="none"/>
<ellipse cx="59.2" cy="36.2" rx="6.2" ry="4.2" stroke-width="1.3"/><path d="M54.6 39.4c-1.4 0.2-1.8 1.6-0.6 2.2c1 0.4 1.4-0.8 0.6-1.4M55 41.6c0.3 1.4 0 2.4-0.5 3.2" stroke-width="1"/>
<path d="M73.4 37.2l2 2l2-2" stroke="#a8a8a8" stroke-width="1.1"/>
<path d="M38.5 30V48M86.5 30V48M185.5 30V48" stroke="#484848" stroke-width="1"/>
<rect x="98" y="33.2" width="9" height="9" fill="#f0f0f0" stroke="none"/>
<rect x="117.8" y="31.8" width="8.4" height="8.4" fill="#ececec" stroke="none"/><rect x="121.8" y="35.4" width="8.4" height="8.4" fill="#ececec" stroke="#535353" stroke-width="0.8"/>
<rect x="140.4" y="32.4" width="7.6" height="7.6" fill="#ececec" stroke="none"/><rect x="143.6" y="35.6" width="7.4" height="7.8" fill="#535353" stroke="#e0e0e0" stroke-width="1.1"/>
<rect x="161.8" y="32.2" width="8" height="8" stroke-width="1.1" stroke="#d4d4d4"/><rect x="165.4" y="35.8" width="8" height="8" stroke-width="1.1" stroke="#d4d4d4"/><rect x="165.4" y="35.8" width="4.4" height="4.4" fill="#f0f0f0" stroke="none"/>
<rect x="292.2" y="34.4" width="8.2" height="8.2" rx="1.4" fill="#f0f0f0" stroke="none"/><path d="M294 38.4l1.9 2l3-4" stroke="#333" stroke-width="1.4" stroke-linecap="round"/>
<circle cx="1200" cy="37.6" r="4.4" stroke-width="1.5"/><path d="M1203.4 41l3.8 3.8" stroke-width="1.8" stroke-linecap="round"/>
<rect x="1218.6" y="33.6" width="13" height="10.4" stroke-width="1.3"/><path d="M1222.4 34V44" stroke-width="1.1"/><path d="M1220.4 36.2V38.6" stroke-width="0.9"/>
<path d="M1241 36.4l2.9 2.8l2.9-2.8" stroke="#a0a0a0" stroke-width="1.2"/>
<path d="M1260.4 35.6H1257.2V44H1270.4V35.6H1267.2" stroke-width="1.5"/><path d="M1263.8 40.6V31.6M1261 34.2l2.8-2.8l2.8 2.8" stroke-width="1.5" stroke-linecap="round"/>
<path d="M1197 10.2H1207" stroke-width="2" stroke="#d8d8d8"/>
<rect x="1219.4" y="6.8" width="7" height="6.6" stroke-width="1.4" stroke="#d8d8d8"/><path d="M1222.6 6.4V4H1230.8V10.6H1227" stroke-width="1.4" stroke="#d8d8d8"/>
<path d="M1252.2 5.2L1260.4 12M1260.4 5.2L1252.2 12" stroke-width="1.7" stroke="#d8d8d8" stroke-linecap="round"/>
</g>
<g id="dockic" fill="none" stroke="#e0e0e0" stroke-width="1.3" stroke-linejoin="round">
<rect x="945.6" y="81.2" width="3.6" height="7.6" fill="#e8e8e8" stroke="none"/><rect x="945.8" y="76.4" width="3.2" height="3.2" stroke-width="1"/><rect x="946.2" y="81.2" width="2.4" height="2" fill="#6a6a6a" stroke="none"/>
<path d="M952.6 86.8c4.4-1 5.6-5.2 3-8.4" stroke-width="2.3" stroke="#e8e8e8"/><path d="M952 76.400h5.800v1.800h-5.800z" fill="#e8e8e8" stroke="none"/>
<path d="M946.8 99.6L958.8 105.6L946.8 111.6Z" fill="#ececec" stroke="none"/>
<circle cx="952.2" cy="140.2" r="3.6" stroke-width="1.2"/><circle cx="952.2" cy="140.2" r="1.3" fill="#e0e0e0" stroke="none"/><path d="M952.2 132.8V147.6M944.8 140.2H959.6M947 135L957.4 145.4M957.4 135L947 145.4" stroke-width="1.1"/>
<path d="M945 167.6V162.4l1.2-1.6l1.2 2.6l1.2-3.4l1.3 2.4l1.2-3.2l1.3 3l1.2-2.6l1.3 2l1.2-2.4l1.3 2.6l1.2-1.4V167.6Z" fill="#e8e8e8" stroke="none"/>
<path d="M952.4 191.6h5.2M953.6 191.6V204.8M956.4 191.6V204.8" stroke-width="1.3"/><path d="M953.6 191.2a3.9 3.9 0 0 0 0 7.8z" fill="#e8e8e8" stroke="#e8e8e8" stroke-width="0.8"/>
<path d="M952.4 223.6L959 227V235.2L952.4 238.8L945.8 235.2V227Z" stroke-width="1.2"/><path d="M945.8 227L952.4 230.4L959 227M952.4 230.4V238.8" stroke-width="1.1"/>
<path d="M946.8 271.6L951 260H952.4L956.4 271.6M948.4 267.6H954.8" stroke-width="1.5"/><path d="M958.4 259V272.4" stroke-width="1.1"/>
</g>
<path d="M958.2 56.2v2.2M960.8 56.2v2.2M1267.4 56.2v2.2M1270 56.2v2.2" stroke="#c8c8c8" stroke-width="1.2"/>
<path d="M1264.4 72.2h7.4M1264.4 74.60000000000001h7.4M1264.4 77.0h7.4" stroke="#a8a8a8" stroke-width="1.2" fill="none"/>
<path d="M1264.4 184h7.4M1264.4 186.4h7.4M1264.4 188.8h7.4" stroke="#a8a8a8" stroke-width="1.2" fill="none"/>
<path d="M1264.4 390.6h7.4M1264.4 393.0h7.4M1264.4 395.40000000000003h7.4" stroke="#a8a8a8" stroke-width="1.2" fill="none"/>
<path d="M921.6 589.4h7.4M921.6 591.8h7.4M921.6 594.1999999999999h7.4" stroke="#a8a8a8" stroke-width="1.2" fill="none"/>
<g id="panelic" fill="none" stroke="#dedede" stroke-width="1.2" stroke-linejoin="round">
<circle cx="1185.2" cy="109.2" r="4.3" stroke="#3a3418" stroke-width="1"/>
<path d="M1241.2 142.8l3.6 2.8l-3.6 2.8z" fill="#f2f2f2" stroke="none"/>
<rect x="979" y="205" width="16" height="15" rx="1.5" fill="#3e3e3e" stroke="none"/><rect x="981.6" y="208" width="10.8" height="9" stroke-width="1.1"/><path d="M982.4 216l3-3.6l2.2 2.2l1.6-1.4l2.6 2.8z" fill="#dedede" stroke="none"/><circle cx="989.8" cy="210.4" r="0.9" fill="#dedede" stroke="none"/>
<rect x="1050.2" y="241.6" width="4.6" height="3.8" rx="1.9" stroke-width="1"/><rect x="1056.2" y="241.6" width="4.6" height="3.8" rx="1.9" stroke-width="1"/><path d="M1053.4 243.5h4.2" stroke-width="1"/>
<circle cx="982.4" cy="418.8" r="2.9" stroke-width="1.4" stroke="#e8e8e8"/><path d="M984.6 421l2.6 2.6" stroke-width="1.6" stroke="#e8e8e8" stroke-linecap="round"/>
<path d="M1056.6 418.2l2.7 2.6l2.7-2.6" stroke="#c0c0c0" stroke-width="1.2"/>
<rect x="1095.2" y="415.4" width="9.6" height="8" stroke-width="1.1"/><path d="M1096 422.6l2.4-3.4l1.8 2l1.4-1.2l2.4 2.6z" fill="#dedede" stroke="none"/>
<circle cx="1119.2" cy="419.2" r="4.4" stroke-width="1.1"/><path d="M1116.1 422.3a4.4 4.4 0 0 1 6.2-6.2z" fill="#e8e8e8" stroke="none"/>
<path d="M1135.6 415H1143.6V417.4H1142.8C1142.6 416.4 1142.2 416.1 1141.2 416.1H1140.4V421.8C1140.4 422.5 1140.8 422.6 1141.6 422.7V423.6H1137.6V422.7C1138.4 422.6 1138.8 422.5 1138.8 421.8V416.1H1138C1137 416.1 1136.6 416.4 1136.4 417.4H1135.6Z" fill="#e4e4e4" stroke="none"/>
<rect x="1155.8" y="416" width="7.6" height="6.8" stroke-width="1.2"/><g fill="#e8e8e8" stroke="none"><rect x="1154.4" y="414.6" width="2.6" height="2.6"/><rect x="1162.2" y="414.6" width="2.6" height="2.6"/><rect x="1154.4" y="421.4" width="2.6" height="2.6"/><rect x="1162.2" y="421.4" width="2.6" height="2.6"/></g>
<rect x="1175.6" y="419" width="7" height="4.8" fill="#e4e4e4" stroke="none"/><path d="M1179.4 419v-1.6a2.2 2.2 0 0 1 4.4 0v1" stroke-width="1.2"/>
<circle cx="1217.6" cy="417" r="4" fill="#3a3a3a" stroke="none"/><circle cx="1217.3" cy="415.4" r="3.4" fill="#f0f0f0" stroke="none"/>
<path d="M1017 470l3.4-3.4M1019 462.4l5.4 5.4M1020.8 463.2l3.2-2.4l2.4 2.4l-2.4 3.2" stroke-width="1.3" stroke="#e4e4e4"/>
<g stroke="#cfcfcf" stroke-width="0.8" fill="none"><rect x="1022" y="468" width="2.6" height="3.4"/><rect x="1025.4" y="468" width="2.6" height="3.4"/></g>
<path d="M1034 464.8c2.6-3.8 7.6-3.8 10.2 0c-2.6 3.8-7.600 3.8-10.200 0z" stroke-width="1.2" stroke="#e4e4e4"/><circle cx="1039.100" cy="464.800" r="1.500" fill="#e4e4e4" stroke="none"/>
<g stroke="#cfcfcf" stroke-width="0.8" fill="none"><rect x="1040.4" y="468.6" width="2.6" height="3.4"/><rect x="1043.8000000000002" y="468.6" width="2.6" height="3.4"/></g>
<text x="1052.6" y="469" font-family="Liberation Serif, serif" font-style="italic" font-size="12" fill="#e4e4e4" stroke="none">fx</text>
<g stroke="#cfcfcf" stroke-width="0.8" fill="none"><rect x="1060.2" y="468.6" width="2.6" height="3.4"/><rect x="1063.6000000000001" y="468.6" width="2.6" height="3.4"/></g>
<rect x="1143.2" y="462.6" width="7.8" height="7.8" rx="1.4" fill="#f0f0f0" stroke="none"/><path d="M1144.800 466.400l1.900 2l3-4" stroke="#333" stroke-width="1.4" stroke-linecap="round"/>
<g stroke="#8a8a8a" fill="none" stroke-width="1.1">
<rect x="1016.6" y="484.8" width="9" height="8.6"/><path d="M1016.6 489.100h9M1021.100 484.800v8.600" /><rect x="1016.6" y="484.800" width="4.500" height="4.300" fill="#8a8a8a" stroke="none"/><rect x="1021.100" y="489.100" width="4.500" height="4.300" fill="#8a8a8a" stroke="none"/>
<path d="M1045.8 484.6l-5.600 5.800" stroke-width="1.700"/><path d="M1039.600 490.600c-1.600 0.400-1.400 2-3 2.800c1.800 0.400 3.800-0.400 4.200-2z" fill="#8a8a8a" stroke="none"/>
<path d="M1057.400 484.200v9.800M1052.400 489.100h10M1057.400 484l-1.600 2h3.200zM1057.400 494.200l-1.600-2h3.200zM1052.200 489.100l2-1.600v3.200zM1062.600 489.100l-2-1.600v3.200z"/>
<path d="M1073.400 484v9.600h7M1071.400 486h7.600v7.600" />
<rect x="1090.200" y="488.600" width="7.600" height="5.200" fill="#8a8a8a" stroke="none"/><path d="M1091.800 488.600v-1.800a2.200 2.200 0 0 1 4.400 0v1.800" stroke-width="1.200"/>
</g>
<g stroke="#8a8a8a" stroke-width="1"><rect x="1108.600" y="672.800" width="4.800" height="3.800" rx="1.900"/><rect x="1115" y="672.800" width="4.800" height="3.800" rx="1.900"/><path d="M1112 674.700h4.400"/></g>
<text x="1131.600" y="679" font-family="Liberation Serif, serif" font-style="italic" font-size="13" fill="#e4e4e4" stroke="none">fx</text>
<rect x="1154" y="670.400" width="11.400" height="8.800" fill="#e8e8e8" stroke="none"/><circle cx="1159.700" cy="674.800" r="2.600" fill="#4a4a4a" stroke="none"/>
<circle cx="1182.200" cy="674.600" r="4.800" stroke-width="1.200"/><path d="M1178.800 678a4.800 4.800 0 0 1 6.800-6.800z" fill="#e8e8e8" stroke="none"/>
<path d="M1199.400 671.200h3.600l1 1.200h6v7h-10.600z" fill="#e4e4e4" stroke="none"/>
<path d="M1222.800 670.400h8.400v8.400h-4.600l-3.800-3.800z" stroke-width="1.300"/><path d="M1222.800 675h3.800v3.800" stroke-width="1.100"/>
<path d="M1245.600 672.200h7.400l-0.600 7.400h-6.200zM1244.400 671h9.800M1247.600 670.600v-1h3.400v1M1247.800 673.400v4.800M1249.300 673.400v4.800M1250.800 673.400v4.800" stroke-width="1.100"/>
<path d="M1145.1 679.1V682.1H1142.1Z" fill="#c8c8c8"/>
<path d="M1190.5 679.1V682.1H1187.5Z" fill="#c8c8c8"/>
</g>
<g id="tlc" fill="#e4e4e4" stroke="none">
<rect x="68.4" y="671.6" width="11.200" height="1.500"/><rect x="68.4" y="673.900" width="11.200" height="1.500"/><rect x="68.4" y="676.200" width="11.200" height="1.300"/><rect x="71.200" y="667.200" width="3.400" height="3.600"/><rect x="68.4" y="671.600" width="2.200" height="5.900" fill="#bdbdbd"/>
<path d="M136.8 672.400h6.600l-3.300 4.200z"/>
<g fill="#8c8c8c"><rect x="154.600" y="669.400" width="1.600" height="8"/><path d="M164.400 669.400v8l-6.200-4z"/><rect x="160.600" y="671" width="1.400" height="4.800" fill="#535353"/></g>
<path d="M184.600 669.200v8.400l-6.800-4.200z"/><rect x="185.600" y="669.200" width="1.800" height="8.400"/>
<path d="M203.600 668.600l8.400 4.600l-8.400 4.600z" fill="#f0f0f0"/>
<rect x="227.200" y="669.200" width="1.800" height="8.400"/><path d="M230 669.200v8.400l6.800-4.200z"/>
<g fill="#8c8c8c"><circle cx="254" cy="670.800" r="1.200"/><circle cx="256.400" cy="672.600" r="1.500"/><circle cx="259.400" cy="675" r="2.300"/></g>
<path d="M276.200 668.600h8.800v8.800h-4.800l-4-4z" fill="none" stroke="#e0e0e0" stroke-width="1.300"/><path d="M276.200 673.400h4v4" fill="none" stroke="#e0e0e0" stroke-width="1.100"/>
<path d="M301.200 671.200h7.400l-0.500 6.800h-6.400zM300.200 670h9.400M303.200 669.600v-1.200h3.400v1.200M303.400 672.400v4.400M304.900 672.400v4.400M306.400 672.400v4.400" fill="none" stroke="#cfcfcf" stroke-width="1.100"/>
</g>
<path d="M260.400 569l-1.600 2.200l1.600 2.200" stroke="#7a7a7a" stroke-width="1" fill="none"/>
<path d="M893.600 569l1.600 2.200l-1.600 2.200" stroke="#7a7a7a" stroke-width="1" fill="none"/>
<path d="M925 81.600l2.200 2.200l2.200-2.200" stroke="#6a6a6a" stroke-width="1" fill="none" transform="rotate(180 927.2 82.700)"/>
<path d="M925 555l2.200 2.200l2.200-2.200" stroke="#7a7a7a" stroke-width="1" fill="none"/>
<path d="M97.4 653.6l2.2 2.2l2.2-2.2" stroke="#b8b8b8" stroke-width="1" fill="none"/>
<path d="M143.4 653.6l2.2 2.2l2.2-2.2" stroke="#b8b8b8" stroke-width="1" fill="none"/>
<path d="M189.4 653.6l2.2 2.2l2.2-2.2" stroke="#b8b8b8" stroke-width="1" fill="none"/>
<path d="M234.4 653.6l2.2 2.2l2.2-2.2" stroke="#b8b8b8" stroke-width="1" fill="none"/>
<path d="M280.4 653.6l2.2 2.2l2.2-2.2" stroke="#b8b8b8" stroke-width="1" fill="none"/>
<path d="M326.4 653.6l2.2 2.2l2.2-2.2" stroke="#b8b8b8" stroke-width="1" fill="none"/>
<path d="M372.4 653.6l2.2 2.2l2.2-2.2" stroke="#b8b8b8" stroke-width="1" fill="none"/>
<path d="M417.4 653.6l2.2 2.2l2.2-2.2" stroke="#b8b8b8" stroke-width="1" fill="none"/>
<path d="M463.4 653.6l2.2 2.2l2.2-2.2" stroke="#b8b8b8" stroke-width="1" fill="none"/>
<path d="M509.4 653.6l2.2 2.2l2.2-2.2" stroke="#b8b8b8" stroke-width="1" fill="none"/>
<path d="M554.4 653.6l2.2 2.2l2.2-2.2" stroke="#b8b8b8" stroke-width="1" fill="none"/>
<path d="M600.4 653.6l2.2 2.2l2.2-2.2" stroke="#b8b8b8" stroke-width="1" fill="none"/></svg>
</body></html>
